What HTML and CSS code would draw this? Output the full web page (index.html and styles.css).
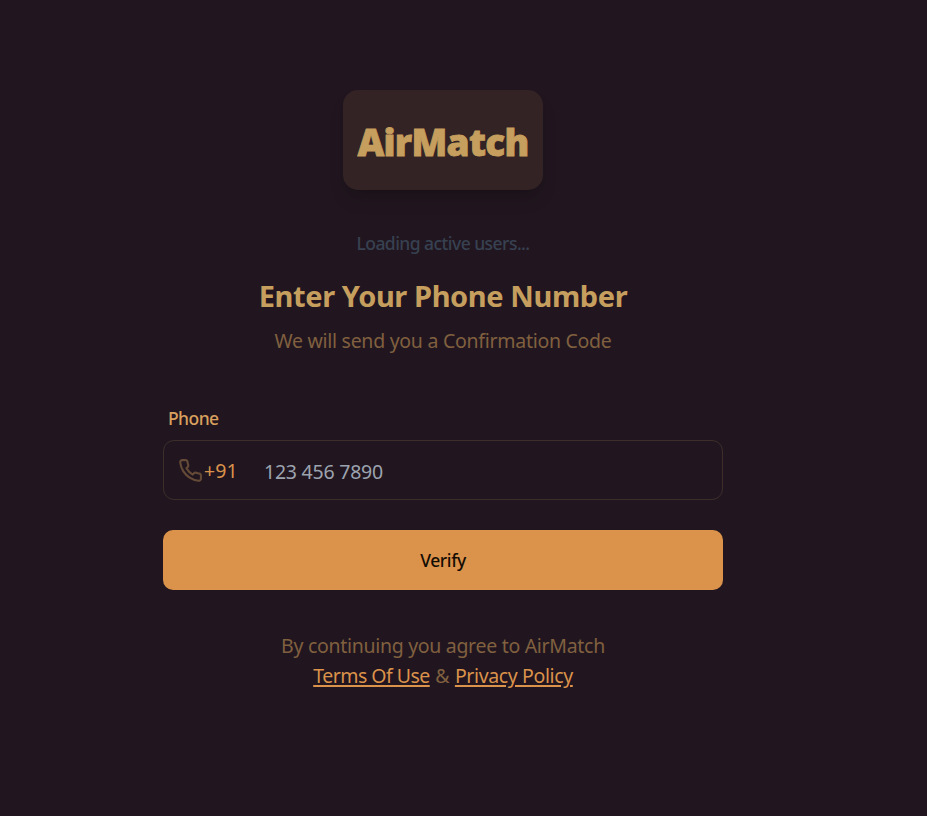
FILE: index.html
```html
<!DOCTYPE html>
<html lang="en">
<head>
<meta charset="utf-8">
<title>AirMatch</title>
<link rel="stylesheet" href="styles.css">
</head>
<body>
<main class="page">
  <div class="logo"><span class="logo-text">AirMatch</span></div>
  <p class="status">Loading active users...</p>
  <h1 class="title">Enter Your Phone Number</h1>
  <p class="subtitle">We will send you a Confirmation Code</p>
  <form class="form">
    <label class="label" for="phone">Phone</label>
    <div class="field">
      <svg class="icon" viewBox="0 0 24 24" fill="none" stroke="currentColor" stroke-width="2" stroke-linecap="round" stroke-linejoin="round"><path d="M22 16.92v3a2 2 0 0 1-2.18 2 19.79 19.79 0 0 1-8.63-3.07 19.5 19.5 0 0 1-6-6 19.79 19.79 0 0 1-3.07-8.67A2 2 0 0 1 4.11 2h3a2 2 0 0 1 2 1.72 12.84 12.84 0 0 0 .7 2.81 2 2 0 0 1-.45 2.11L8.09 9.91a16 16 0 0 0 6 6l1.27-1.27a2 2 0 0 1 2.11-.45 12.84 12.84 0 0 0 2.81.7A2 2 0 0 1 22 16.92z"/></svg>
      <span class="code">+91</span>
      <input class="input" id="phone" type="tel" placeholder="123 456 7890">
    </div>
    <button class="verify" type="button">Verify</button>
  </form>
  <p class="legal"><span class="agree">By continuing you agree to AirMatch</span><br><a class="link terms" href="#">Terms Of Use</a> <span class="amp">&amp;</span> <a class="link" href="#">Privacy Policy</a></p>
</main>
</body>
</html>
```
FILE: styles.css
```css
* { box-sizing: border-box; margin: 0; padding: 0; }

body {
  height: 816px;
  overflow: hidden;
  background: #21161f;
  font-family: "Noto Sans", "Open Sans", sans-serif;
  font-size: 20px;
  line-height: 30px;
}

.page {
  display: flex;
  flex-direction: column;
  align-items: center;
  width: 560px;
  margin-left: 163px;
  padding-top: 90px;
  white-space: nowrap;
}

.logo {
  display: flex;
  align-items: center;
  justify-content: center;
  width: 200px;
  height: 100px;
  padding-top: 4px;
  border-radius: 15px;
  background: #332324;
  box-shadow: 0 12px 18px -4px rgba(0, 0, 0, 0.15), 0 5px 8px -5px rgba(0, 0, 0, 0.15);
}

.logo-text {
  color: #c69f5e;
  font-size: 37px;
  font-weight: 900;
  letter-spacing: -0.7px;
  -webkit-text-stroke: 0.8px #c69f5e;
}

.status {
  margin-top: 38px;
  color: #374151;
  font-size: 17.5px;
  font-weight: 500;
  letter-spacing: -0.54px;
}

.title {
  margin-top: 23px;
  color: #c69f5e;
  font-size: 29px;
  font-weight: 700;
  letter-spacing: -0.4px;
}

.subtitle {
  margin-top: 15px;
  color: #80603f;
  font-size: 19.5px;
  letter-spacing: -0.27px;
}

.form { width: 100%; margin-top: 47px; }

.label {
  display: block;
  padding-left: 5px;
  color: #d9a05e;
  font-size: 17.5px;
  font-weight: 500;
  letter-spacing: -0.55px;
}

.field {
  display: flex;
  align-items: center;
  height: 60px;
  margin-top: 7px;
  padding-left: 14px;
  border: 1px solid #3d2e2b;
  border-radius: 11px;
}

.icon { width: 25px; height: 25px; color: #654b37; }

.code {
  width: 61px;
  padding: 2px 0 0 1px;
  color: #db924b;
  font-size: 19.5px;
  letter-spacing: 0.1px;
}

.input {
  width: 400px;
  padding-top: 3px;
  border: 0;
  outline: 0;
  background: transparent;
  font: inherit;
  font-size: 19.5px;
  letter-spacing: -0.23px;
}

.input::placeholder { color: #9ca3af; opacity: 1; }

.verify {
  display: block;
  width: 100%;
  height: 60px;
  margin-top: 30px;
  border: 0;
  border-radius: 10px;
  background: #db924b;
  color: #130c03;
  font: inherit;
  font-size: 17.5px;
  font-weight: 500;
  letter-spacing: -0.4px;
}

.legal {
  margin-top: 41px;
  color: #80603f;
  font-size: 19.5px;
  letter-spacing: -0.3px;
  text-align: center;
}

.link {
  color: #db924b;
  text-decoration: underline;
  text-decoration-thickness: 2px;
  text-underline-offset: 2px;
  letter-spacing: -0.37px;
}

.terms { letter-spacing: -0.52px; }

.amp { margin: 0 0.8px; }
```
